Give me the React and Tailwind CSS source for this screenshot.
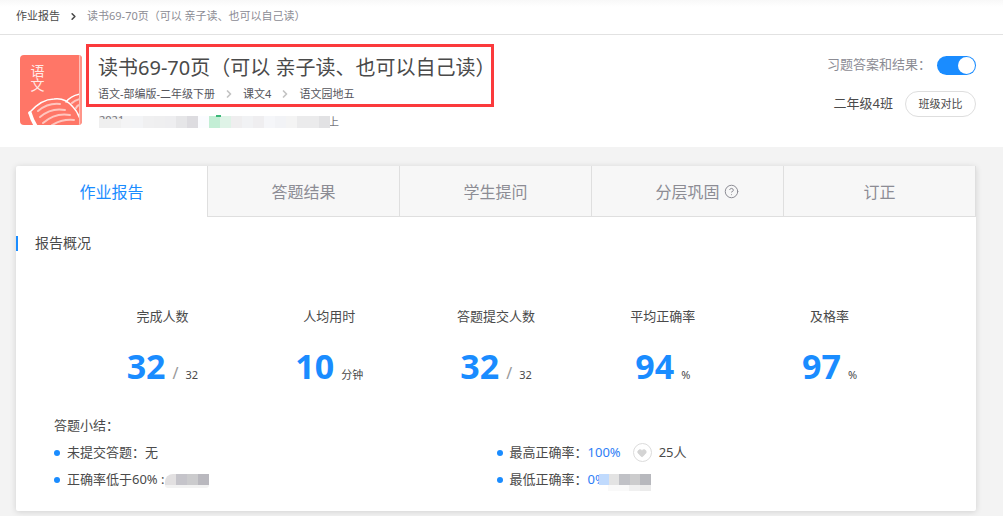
import React, { useState } from 'react';
import { ChevronRight, CircleHelp, Heart } from 'lucide-react';

const tabs = [
    { key: 'report', label: '作业报告' },
    { key: 'answers', label: '答题结果' },
    { key: 'questions', label: '学生提问' },
    { key: 'levels', label: '分层巩固', help: true },
    { key: 'corrections', label: '订正' },
];

const stats = [
    { label: '完成人数', value: '32', total: '32' },
    { label: '人均用时', value: '10', unit: '分钟' },
    { label: '答题提交人数', value: '32', total: '32' },
    { label: '平均正确率', value: '94', unit: '%' },
    { label: '及格率', value: '97', unit: '%' },
];

const dateCells = ['bg-[#efefef]', 'bg-[#f0f0f0]', 'bg-[#f4f4f5]', 'bg-[#f3f4f6]', 'bg-[#f0f0f1]', 'bg-[#efeff0]', 'bg-[#eeeef0]', 'bg-[#e6e6e8]', 'bg-[#dddce0]'];
const timeCells = ['bg-[#c3eed5]', 'bg-[#dff3e7]', 'bg-[#efeeef]', 'bg-[#f1f2f4]', 'bg-[#efeef0]', 'bg-[#f5f6f9]', 'bg-[#f2f3f6]', 'bg-[#f4f4f4]', 'bg-[#ebebec]', 'bg-[#ebebec]', 'bg-[#e2e2e4]'];

const Mosaic = ({ cells, className }) => (
    <span className={`flex overflow-hidden ${className}`}>
        {cells.map((cell, i) => <span key={i} className={`flex-1 ${cell}`} />)}
    </span>
);

const BookCover = () => (
    <svg width="62" height="70" viewBox="0 0 62 70" className="shrink-0" role="img" aria-label="语文">
        <defs>
            <clipPath id="cover"><rect width="62" height="70" rx="4" /></clipPath>
            <clipPath id="front"><rect width="59" height="70" /></clipPath>
        </defs>
        <g clipPath="url(#cover)">
            <rect width="62" height="70" fill="#ff7667" />
            <rect x="59" width="1" height="70" fill="#ffc0b8" />
            <rect x="60" width="2" height="70" fill="#ff9589" />
            <g clipPath="url(#front)" fill="none" stroke="#fff" strokeLinecap="round">
                <path d="M9 58 C16 50 25 44 34 44 C41 43 48 46 53 52 C57 56 60 62 61 69" strokeWidth="1.4" />
                <path d="M46 47 C49 43 54 40 60 39" strokeWidth="1.4" />
                <path d="M10 58 C12 65 14 69 18 74" strokeWidth="3.5" />
                <g stroke="#ffc6bf" strokeWidth="2">
                    <path d="M18 56 C24 51 31 48 40 49" />
                    <path d="M20 62 C27 56 35 53 45 55" />
                    <path d="M23 68 C31 61 39 58 50 60" />
                    <path d="M32 70 C39 66 45 64 54 65" />
                    <path d="M52 48 C54 46 56 45 60 44" />
                    <path d="M56 53 C57 51 58 50 60 50" />
                </g>
            </g>
            <text x="17" y="9" fontSize="14" fill="#ffe9e6" className="[writing-mode:vertical-rl]">语文</text>
        </g>
    </svg>
);

const Bullet = () => <span className="w-1.5 h-1.5 rounded-full bg-[#1a8cff] mr-[7px] shrink-0" />;

const App = () => {
    const [active, setActive] = useState('report');
    const [showAnswers, setShowAnswers] = useState(true);

    return (
        <div className="min-h-screen bg-[#f3f3f3] text-[#4a4a4a] font-['Noto_Sans','Noto_Sans_CJK_SC',sans-serif]">
            <nav className="flex items-center h-[35px] pl-4 pb-0.5 bg-gradient-to-b from-[#f8f8f8] to-white to-20% border-b border-[#e2e2e2] text-[11px]">
                <a href="#report">作业报告</a>
                <ChevronRight size={11} strokeWidth={3.5} className="mx-2" />
                <span className="text-[#8c8c94]">读书69-70页（可以 亲子读、也可以自己读）</span>
            </nav>

            <header className="flex justify-between h-28 pl-5 pr-[27px] bg-white">
                <div className="flex">
                    <div className="pt-5"><BookCover /></div>
                    <div className="ml-1 pt-[9px]">
                        <div className="w-[408px] h-[63px] pl-[9px] pt-[7px] border-3 border-[#fb3a3c]">
                            <h1 className="text-[20px] leading-7 whitespace-nowrap">读书69-70页（可以 亲子读、也可以自己读）</h1>
                            <div className="flex items-center gap-2 text-[11px] leading-6 whitespace-nowrap text-[#55555c]">
                                <span>语文-部编版-二年级下册</span>
                                <ChevronRight size={12} strokeWidth={3.5} className="text-[#c4c4c4]" />
                                <span>课文4</span>
                                <ChevronRight size={12} strokeWidth={3.5} className="text-[#c4c4c4]" />
                                <span>语文园地五</span>
                            </div>
                        </div>
                        <div className="flex items-center pl-[13px] pt-[7px] text-[11px] leading-4 text-[#77777d]">
                            <span className="relative">
                                <Mosaic cells={dateCells} className="w-[99px] h-3" />
                                <span className="absolute left-0 top-0 h-[3px] leading-2 overflow-hidden">2021</span>
                            </span>
                            <span className="w-[11px] h-3 bg-[#fbfcff]" />
                            <span className="relative">
                                <Mosaic cells={timeCells} className="w-[121px] h-3" />
                                <span className="absolute left-[7px] -top-px w-[5px] h-0.5 bg-[#3cb878]" />
                            </span>
                            <span className="-ml-0.5">上</span>
                        </div>
                    </div>
                </div>

                <div className="flex flex-col items-end pt-5 text-[13px]">
                    <label className="flex items-center gap-1.5 h-5 text-[#8c8c94] cursor-pointer">
                        习题答案和结果：
                        <input type="checkbox" role="switch" checked={showAnswers} onChange={(e) => setShowAnswers(e.target.checked)} className="peer sr-only" />
                        <span className="flex w-[39px] h-[19px] p-px rounded-full bg-[#ccc] peer-checked:bg-[#1a8cff] peer-checked:justify-end">
                            <span className="w-[17px] h-[17px] rounded-full bg-white" />
                        </span>
                    </label>
                    <div className="flex items-center gap-3 mt-4">
                        <span>二年级4班</span>
                        <button type="button" className="w-[71px] h-[26px] border border-[#dedede] rounded-full text-[11px] cursor-pointer">班级对比</button>
                    </div>
                </div>
            </header>

            <main className="pt-[19px] pl-4 pr-[27px] pb-[5px]">
                <section className="bg-white rounded-xs shadow-[0_1px_6px_rgba(0,0,0,0.14)] pb-[18px]">
                    <div role="tablist" className="flex h-[51px]">
                        {tabs.map((tab) => (
                            <button
                                key={tab.key}
                                type="button"
                                role="tab"
                                aria-selected={active === tab.key}
                                onClick={() => setActive(tab.key)}
                                className={`flex flex-1 items-center justify-center text-base border-r border-[#dfdfdf] cursor-pointer ${active === tab.key ? 'text-[#1a8cff]' : 'bg-[#f7f7f7] text-[#8c8c94] border-b pt-0.5'}`}
                            >
                                <span className="relative">
                                    {tab.label}
                                    {tab.help && <CircleHelp size={15} strokeWidth={1.6} className="absolute left-full top-1 ml-1" />}
                                </span>
                            </button>
                        ))}
                    </div>

                    <h2 className="flex items-center mt-4 h-5 text-sm">
                        <span className="w-0.5 h-[15px] mr-[17px] bg-[#1a8cff]" />
                        报告概况
                    </h2>

                    <div className="flex mt-[53px] px-[63px]">
                        {stats.map((stat, i) => (
                            <dl key={i} className="flex-1 text-center">
                                <dt className="text-[13px] leading-5">{stat.label}</dt>
                                <dd className="flex items-baseline justify-center mt-5 text-[11px] leading-[40px]">
                                    <strong className="text-[34px] text-[#1a8cff]">{stat.value}</strong>
                                    {stat.total && <span className="mx-[7px] text-base text-[#999]">/</span>}
                                    <span className={stat.total ? '' : 'ml-[7px]'}>{stat.total || stat.unit}</span>
                                </dd>
                            </dl>
                        ))}
                    </div>

                    <div className="pl-[38px] mt-5 text-[13px]">
                        <h3 className="leading-5">答题小结：</h3>
                        <div className="flex mt-1">
                            <ul className="w-[48%]">
                                <li className="flex items-center h-[27px]"><Bullet />未提交答题：无</li>
                                <li className="flex items-center h-[27px]"><Bullet />正确率低于60% :
                                    <span className="relative">
                                        <Mosaic cells={['bg-[#e2e0e1]', 'bg-[#c5c4ca]', 'bg-[#cbcbcd]', 'bg-[#b9b8be]']} className="w-[44px] h-[11px] rounded-tl-lg" />
                                        <span className="absolute left-0 top-full w-[44px] h-[3px] rounded-b-sm bg-[#f2f2f2]" />
                                    </span>
                                </li>
                            </ul>
                            <ul>
                                <li className="flex items-center h-[27px]"><Bullet />最高正确率：
                                    <span className="text-[#2d7df6]">100%</span>
                                    <span className="flex items-center justify-center w-[19px] h-[19px] ml-3 mr-[7px] border border-[#dcdcdc] rounded-full">
                                        <Heart size={10} className="fill-[#d4d4d4] text-[#d4d4d4]" />
                                    </span>
                                    25人
                                </li>
                                <li className="flex items-center h-[27px]"><Bullet />最低正确率：
                                    <span className="relative w-[63px] text-[#2d7df6]">
                                        0%
                                        <Mosaic cells={['bg-[#c0dafd]', 'bg-[#e3e3e3]', 'bg-[#c0c1c6]', 'bg-[#cccccd]', 'bg-[#b7b8bd]']} className="absolute left-[11px] right-0 top-1 h-[11px]" />
                                        <Mosaic cells={['bg-[#f9f9f9]', 'bg-[#f9f9f9]', 'bg-[#f0f0f0]', 'bg-[#ebebeb]']} className="absolute left-5 right-0 top-[15px] h-[6px]" />
                                    </span>
                                </li>
                            </ul>
                        </div>
                    </div>
                </section>
            </main>
        </div>
    );
};

export default App;
